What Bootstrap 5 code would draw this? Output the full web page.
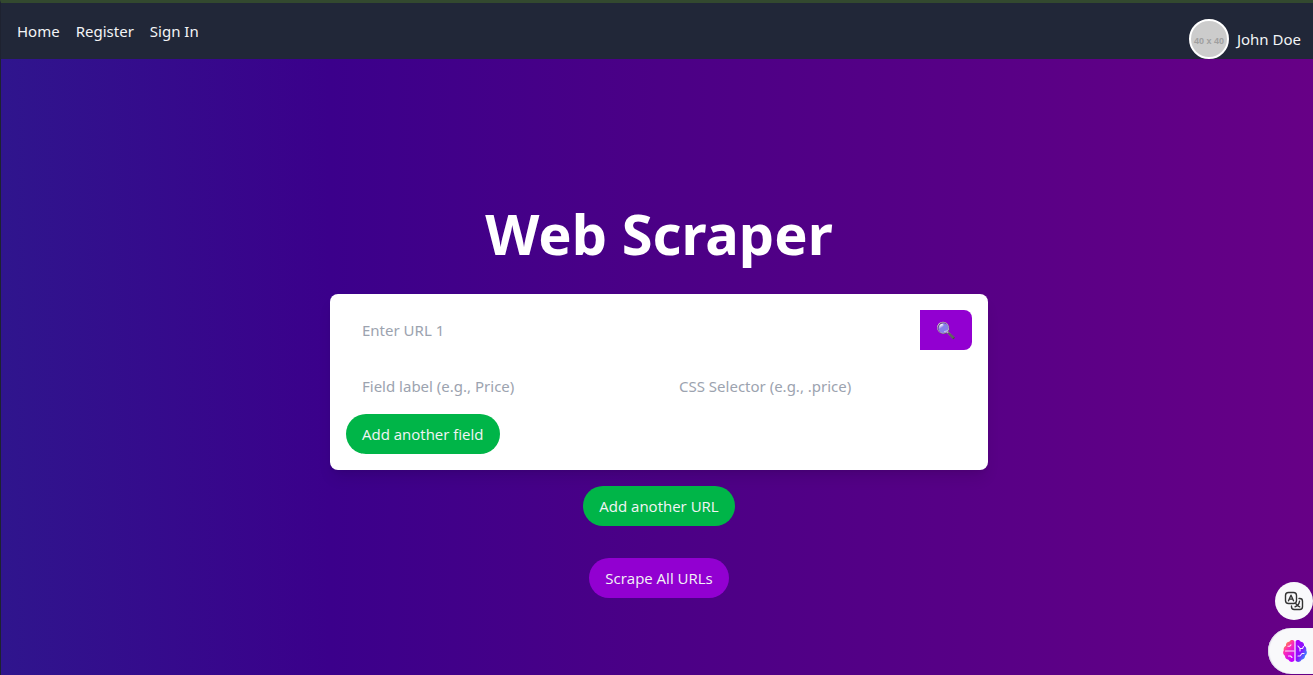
<!DOCTYPE html>
<html lang="en">
<head>
<meta charset="utf-8">
<meta name="viewport" content="width=device-width, initial-scale=1">
<title>Web Scraper</title>
<link href="https://cdn.jsdelivr.net/npm/bootstrap@5.3.0/dist/css/bootstrap.min.css" rel="stylesheet">
<style>
body { font-family: "Noto Sans", sans-serif; font-size: 15px; line-height: 24px; background: #1e2230; overflow-x: hidden; }
.shell { border-top: 3px solid #33492f; border-left: 1px solid #1e2230; margin-right: -4px; }
.topbar { background: #212738; padding: 16px 16px 0; }
.topbar a { color: #f3f4f6; text-decoration: none; }
.avatar { width: 40px; height: 40px; border: 2px solid #fff; background: #ccc; color: #a0a0a0; font: bold 9px "Liberation Sans", sans-serif; padding-top: 3px; }
.hero { background: linear-gradient(90deg, #2f158d 0%, #3b008b 25%, #4b0086 50%, #580086 75%, #670086 100%); padding: 144px 0 76px; }
.hero-title { font-size: 56px; line-height: 60px; font-weight: 700; margin-bottom: 31px; }
.panel { width: 50%; border-radius: 8px; box-shadow: 0 10px 15px -3px rgba(0,0,0,.1), 0 4px 6px -4px rgba(0,0,0,.1); }
.plain-input { border: 0; background: #fff; padding: 8px 16px; height: 40px; min-width: 0; flex: 1 1 0; outline-offset: -2px; }
.plain-input::placeholder { color: #9ca3af; opacity: 1; }
.pill { font-family: "Open Sans", sans-serif; border: 0; border-radius: 20px; padding: 8px 16px; color: #f3f4f6; }
.pill-green { background: #00b548; }
.pill-purple { background: #9200d1; }
.run-btn { margin-top: 32px; }
.search-btn { border: 0; width: 52px; background: #9200d1; border-radius: 0 8px 8px 0; font-size: 16px; }
.side-tools { bottom: 1px; }
.tool-btn { border: 0; background: #f9f9fb; }
.tool-translate { width: 38px; height: 38px; border-radius: 50%; }
.tool-brain { width: 45px; height: 46px; border-radius: 23px 0 0 23px; padding: 0 0 0 9px; box-shadow: inset 1px 0 1px #d8d4e4; }
</style>
</head>
<body>
<div class="shell min-vh-100 d-flex flex-column">
  <nav class="topbar d-flex justify-content-between align-items-start">
    <div class="d-flex gap-3">
      <a href="#">Home</a>
      <a href="#">Register</a>
      <a href="#">Sign In</a>
    </div>
    <div class="d-flex align-items-center gap-2">
      <span class="avatar rounded-circle d-flex align-items-center justify-content-center text-nowrap">40 x 40</span>
      <a href="#">John Doe</a>
    </div>
  </nav>
  <main class="hero flex-grow-1 d-flex flex-column align-items-center">
    <h1 class="hero-title text-white">Web Scraper</h1>
    <form class="panel bg-white p-3">
      <div class="d-flex mb-3">
        <input class="plain-input" type="url" placeholder="Enter URL 1" aria-label="Enter URL 1">
        <button class="search-btn" type="button" aria-label="Search">🔍</button>
      </div>
      <div class="d-flex gap-2 mb-2">
        <input class="plain-input" type="text" placeholder="Field label (e.g., Price)" aria-label="Field label">
        <input class="plain-input" type="text" placeholder="CSS Selector (e.g., .price)" aria-label="CSS selector">
      </div>
      <button class="pill pill-green d-block" type="button">Add another field</button>
    </form>
    <button class="pill pill-green mt-3" type="button">Add another URL</button>
    <button class="pill pill-purple run-btn" type="button">Scrape All URLs</button>
  </main>
</div>
<aside class="side-tools position-fixed end-0 d-flex flex-column align-items-end gap-2">
  <button class="tool-btn tool-translate d-flex align-items-center justify-content-center p-0" type="button" aria-label="Translate">
    <svg width="20" height="20" viewBox="0 0 20 20" fill="none" stroke="#333" stroke-width="1.4" stroke-linecap="round" stroke-linejoin="round">
      <rect x="1.5" y="1.5" width="11" height="11" rx="3"/>
      <path d="M4.5 9.800 7 4.200l2.500 5.600M5.400 8.100h3.200"/>
      <path d="M15 7.500h.8a2.700 2.700 0 0 1 2.700 2.700v5.600a2.700 2.700 0 0 1-2.700 2.700h-5.600a2.700 2.700 0 0 1-2.700-2.700V15"/>
      <path d="M15.500 10.300c-.4 2.600-2 4.500-4.500 5.500M11.800 12.600c1 1.700 2.200 2.700 3.900 3.300"/>
    </svg>
  </button>
  <button class="tool-btn tool-brain d-flex align-items-center justify-content-center" type="button" aria-label="Assistant">
    <svg width="24" height="24" viewBox="0 0 24 24">
      <defs>
        <linearGradient id="lobeL" x1="0" y1="0" x2=".6" y2="1"><stop offset=".1" stop-color="#ffa51e"/><stop offset=".45" stop-color="#ff2fb0"/><stop offset="1" stop-color="#c400ff"/></linearGradient>
        <linearGradient id="lobeR" x1="0" y1="0" x2="1" y2="1"><stop offset="0" stop-color="#b000f5"/><stop offset=".5" stop-color="#8a10ff"/><stop offset=".9" stop-color="#20a8ff"/></linearGradient>
      </defs>
      <path fill="url(#lobeL)" d="M11.400 2.500C10.400.5 7.300.6 6.300 2.700 4 2.800 2.700 4.600 3 6.700 1 7.700.3 9.500.8 11.300-.4 13.200 0 15.600 1.900 16.800c0 2.200 1.500 3.800 3.600 3.900 1.200 2.500 4.700 3 5.900.8Z"/>
      <path fill="url(#lobeR)" d="M12.600 2.500c1-2 4.100-1.900 5.100.2 2.300.1 3.600 1.900 3.300 4 2 1 2.700 2.800 2.200 4.600 1.200 1.900.8 4.300-1.100 5.500 0 2.200-1.500 3.800-3.600 3.900-1.200 2.500-4.700 3-5.900.8Z"/>
      <g fill="none" stroke="#f6eaff" stroke-width="1.100" stroke-linecap="round" stroke-linejoin="round">
        <path d="M2.500 12H11M5 7.300h1.500L8 5.800M5.500 17h2L9 18.500"/>
        <path d="M15 7l2 2.500h2.500l1-2M17 9.500V12M15 17h2l2-2.500h2"/>
      </g>
    </svg>
  </button>
</aside>
<script src="https://cdn.jsdelivr.net/npm/bootstrap@5.3.0/dist/js/bootstrap.bundle.min.js"></script>
</body>
</html>
